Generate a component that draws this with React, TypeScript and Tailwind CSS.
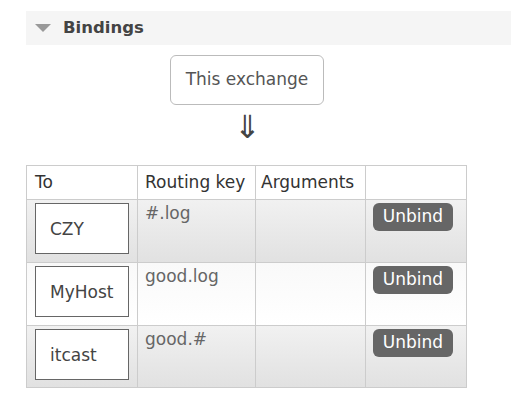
import React from 'react'

const bindings = [
  { to: 'CZY', key: '#.log', alt: true, h: 'h-[63px]' },
  { to: 'MyHost', key: 'good.log', alt: false, h: 'h-[63px]' },
  { to: 'itcast', key: 'good.#', alt: true, h: 'h-[62px]' },
]

export default function App() {
  return (
    <div className="min-h-[410px] bg-white pt-[11px] pl-[26px] font-['DejaVu_Sans',Verdana,sans-serif]">
      <div className="flex h-[34px] items-center bg-[#f5f5f5]">
        <svg width="16" height="9" viewBox="0 0 16 9" className="ml-[9px]">
          <polygon points="0,0 16,0 8,8" fill="#999" />
        </svg>
        <span className="ml-[12px] text-[16.5px] font-bold text-[#444]">Bindings</span>
      </div>

      <div className="ml-[144px] mt-[10px] flex h-[50px] w-[154px] items-center justify-center rounded-[6px] border border-[#bbb] text-[17px] text-[#555]">
        This exchange
      </div>
      <div className="ml-[144px] mt-[4px] w-[154px] text-center text-[32px] font-light leading-[36px] text-[#444]">⇓</div>

      <table className="mt-[20px] w-[441px] table-fixed border-collapse text-[17px]">
        <thead>
          <tr className="h-[34px] bg-white text-left text-[#333]">
            <th className="w-[111px] border border-[#ccc] px-[8px] font-normal">To</th>
            <th className="w-[118px] border border-[#ccc] px-[7px] font-normal">Routing key</th>
            <th className="w-[110px] border border-[#ccc] px-[5px] font-normal">Arguments</th>
            <th className="w-[101px] border border-[#ccc] font-normal"></th>
          </tr>
        </thead>
        <tbody>
          {bindings.map((b) => (
            <tr
              key={b.to}
              className={
                b.h +
                (b.alt
                  ? ' bg-gradient-to-b from-[#f1f1f1] to-[#e1e1e1]'
                  : ' bg-gradient-to-b from-[#f9f9f9] to-[#ffffff]')
              }
            >
              <td className="border border-[#ccc] px-[8px] py-[3px] align-top">
                <div className="flex h-[51px] w-[94px] items-center border border-[#666] bg-white pl-[14px] pt-[2px] text-[#444]">
                  {b.to}
                </div>
              </td>
              <td className="border border-[#ccc] px-[7px] pt-[1px] align-top text-[#666]">{b.key}</td>
              <td className="border border-[#ccc]"></td>
              <td className="border border-[#ccc] px-[7px] pt-[3px] align-top">
                <button className="h-[28px] w-[80px] rounded-[6px] bg-[#666] text-[17px] font-medium text-white">
                  Unbind
                </button>
              </td>
            </tr>
          ))}
        </tbody>
      </table>
    </div>
  )
}
